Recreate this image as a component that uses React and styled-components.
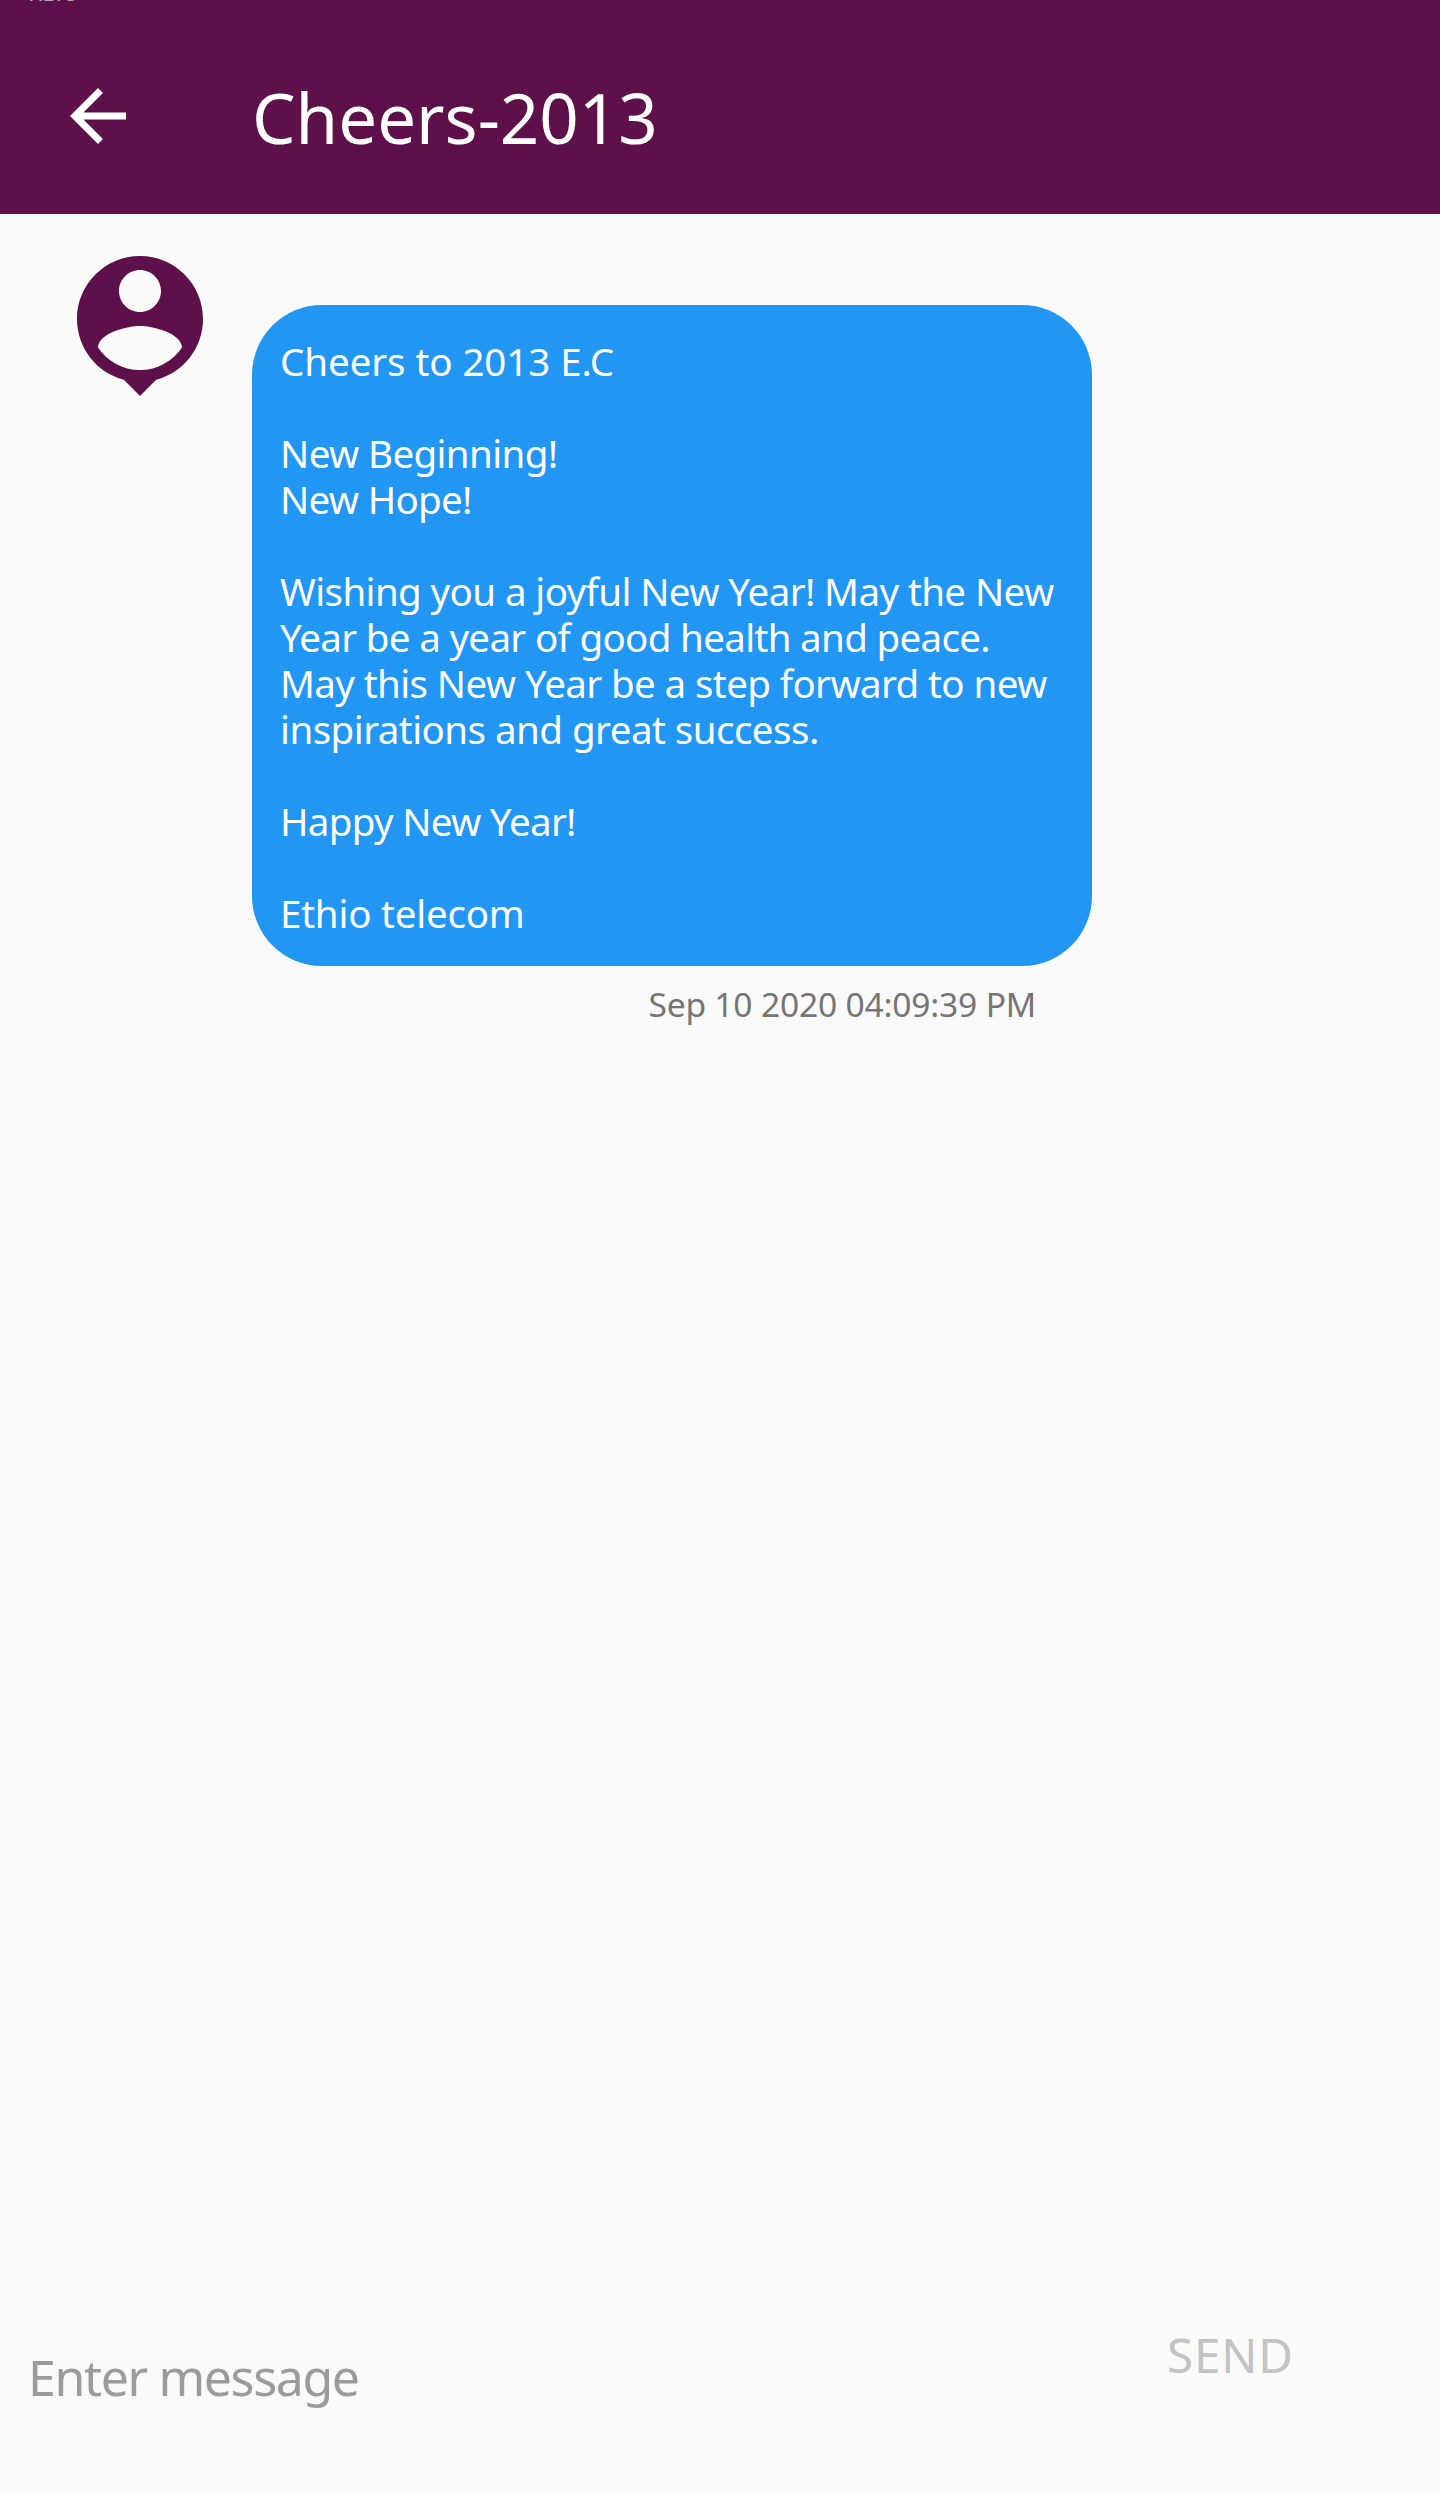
import React from 'react';
import styled, { createGlobalStyle } from 'styled-components';

const GlobalStyle = createGlobalStyle`
  *, *::before, *::after { box-sizing: border-box; }
  body { margin: 0; background: #fafafa; }
`;

const Screen = styled.div`
  display: flex;
  flex-direction: column;
  width: 1440px;
  height: 2493px;
  overflow: hidden;
  background: #fafafa;
  font-family: 'Noto Sans', 'Open Sans', sans-serif;
`;

const Header = styled.header`
  display: flex;
  flex-direction: column;
  height: 214px;
  background: #5d1049;
  color: #fff;
`;

const StatusStrip = styled.div`
  height: 18px;
  padding-left: 28px;
  overflow: hidden;
`;

const NetworkSpeed = styled.div`
  margin-top: -17px;
  font-size: 23px;
  line-height: 18px;
  color: rgba(255, 255, 255, 0.6);
`;

const Toolbar = styled.div`
  display: flex;
  align-items: center;
  height: 196px;
  padding-left: 56px;
`;

const BackButton = styled.button`
  display: flex;
  width: 196px;
  padding: 0;
  border: 0;
  background: none;
  color: inherit;
`;

const Title = styled.h1`
  margin: 0;
  padding-top: 2px;
  font-size: 69px;
  font-weight: 400;
  line-height: 80px;
  white-space: nowrap;
`;

const Conversation = styled.main`
  display: flex;
  flex: 1;
  align-items: flex-start;
`;

const Avatar = styled.div`
  display: flex;
  width: 252px;
  padding: 27.5px 0 0 56px;
`;

const Message = styled.article`
  display: flex;
  flex-direction: column;
  width: 840px;
  padding-top: 91px;
`;

const Bubble = styled.div`
  height: 661px;
  padding: 33px 0 0 28px;
  border-radius: 70px;
  background: #2196f3;
  color: #fff;
  font-size: 38.5px;
  line-height: 46px;
`;

const Line = styled.div`
  height: 46px;
  letter-spacing: ${(p) => p.$spacing}px;
  white-space: nowrap;
`;

const Timestamp = styled.time`
  align-self: flex-end;
  margin: 15px 56px 0 0;
  color: #757575;
  font-size: 33.6px;
  line-height: 46px;
  letter-spacing: -0.2px;
  white-space: nowrap;
`;

const Composer = styled.footer`
  display: flex;
  align-items: flex-start;
  height: 193px;
`;

const MessageInput = styled.input`
  width: 1139px;
  height: 68px;
  margin: 43px 0 0 28px;
  padding: 0;
  border: 0;
  outline: 0;
  background: none;
  font-family: inherit;
  font-size: 50px;
  line-height: 68px;
  letter-spacing: -1.37px;

  &::placeholder {
    color: #9b9b9b;
    opacity: 1;
  }
`;

const SendButton = styled.button`
  margin-top: 23px;
  padding: 0;
  border: 0;
  background: none;
  color: #c3c3c3;
  font-family: inherit;
  font-size: 47.6px;
  line-height: 64px;
  letter-spacing: 0.8px;
`;

const message = [
  { text: 'Cheers to 2013 E.C', spacing: -0.07 },
  { text: '' },
  { text: 'New Beginning!', spacing: -0.62 },
  { text: 'New Hope!', spacing: -0.7 },
  { text: '' },
  { text: 'Wishing you a joyful New Year! May the New', spacing: -0.6 },
  { text: 'Year be a year of good health and peace.', spacing: -0.67 },
  { text: 'May this New Year be a step forward to new', spacing: -0.6 },
  { text: 'inspirations and great success.', spacing: -0.53 },
  { text: '' },
  { text: 'Happy New Year!', spacing: -0.7 },
  { text: '' },
  { text: 'Ethio telecom', spacing: -0.22 },
];

const ArrowIcon = () => (
  <svg width="84" height="84" viewBox="0 0 24 24" fill="currentColor">
    <path d="M20 11H7.83l5.59-5.59L12 4l-8 8 8 8 1.41-1.41L7.83 13H20v-2z" />
  </svg>
);

const PersonPinIcon = () => (
  <svg width="168" height="168" viewBox="0 0 24 24" fill="#5d1049">
    <path d="M12 2c-4.97 0-9 4.03-9 9 0 4.17 2.84 7.67 6.69 8.69L12 22l2.31-2.31C18.16 18.67 21 15.17 21 11c0-4.97-4.03-9-9-9zm0 2c1.66 0 3 1.34 3 3s-1.34 3-3 3-3-1.34-3-3 1.34-3 3-3zm0 14.3c-2.5 0-4.71-1.28-6-3.22.03-1.99 4-3.08 6-3.08 1.99 0 5.97 1.09 6 3.08-1.29 1.94-3.5 3.22-6 3.22z" />
  </svg>
);

export default function App() {
  return (
    <Screen>
      <GlobalStyle />
      <Header>
        <StatusStrip>
          <NetworkSpeed>KB/s</NetworkSpeed>
        </StatusStrip>
        <Toolbar>
          <BackButton aria-label="Back">
            <ArrowIcon />
          </BackButton>
          <Title>Cheers-2013</Title>
        </Toolbar>
      </Header>
      <Conversation>
        <Avatar>
          <PersonPinIcon />
        </Avatar>
        <Message>
          <Bubble>
            {message.map((line, i) => (
              <Line key={i} $spacing={line.spacing || 0}>
                {line.text}
              </Line>
            ))}
          </Bubble>
          <Timestamp>Sep 10 2020 04:09:39 PM</Timestamp>
        </Message>
      </Conversation>
      <Composer>
        <MessageInput placeholder="Enter message" />
        <SendButton>SEND</SendButton>
      </Composer>
    </Screen>
  );
}
